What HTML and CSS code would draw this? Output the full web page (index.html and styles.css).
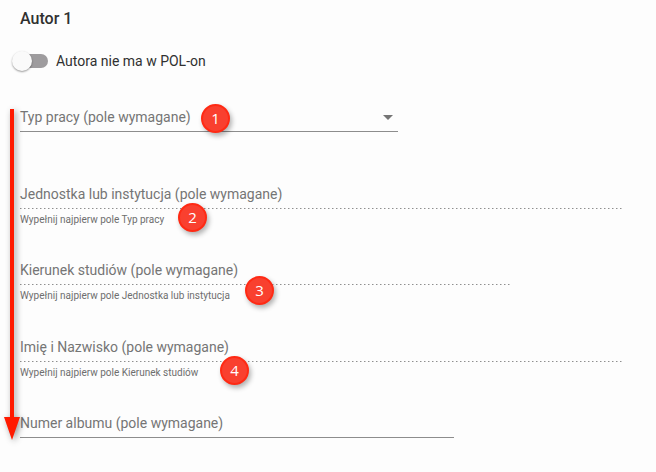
FILE: index.html
```html
<!DOCTYPE html>
<html lang="pl">
<head>
<meta charset="utf-8">
<meta name="viewport" content="width=device-width, initial-scale=1">
<title>Autor 1</title>
<link rel="stylesheet" href="styles.css">
</head>
<body>
<main class="page">
  <form class="author">
    <h2 class="title">Autor 1</h2>
    <label class="toggle">
      <input class="switch" type="checkbox" role="switch">
      <span>Autora nie ma w POL-on</span>
    </label>

    <div class="field field-select">
      <div class="control">
        <select class="input" id="type"><option value=""></option></select>
        <label class="label" for="type">Typ pracy (pole wymagane)</label>
        <svg class="caret" viewBox="0 0 10 5" aria-hidden="true"><path d="M0 0h10L5 5z"/></svg>
      </div>
    </div>
    <div class="field">
      <div class="control disabled">
        <input class="input" id="unit" type="text" disabled aria-describedby="unit-hint">
        <label class="label" for="unit">Jednostka lub instytucja (pole wymagane)</label>
      </div>
      <p class="hint" id="unit-hint">Wypełnij najpierw pole Typ pracy</p>
    </div>
    <div class="field field-course">
      <div class="control disabled">
        <input class="input" id="course" type="text" disabled aria-describedby="course-hint">
        <label class="label" for="course">Kierunek studiów (pole wymagane)</label>
      </div>
      <p class="hint" id="course-hint">Wypełnij najpierw pole Jednostka lub instytucja</p>
    </div>
    <div class="field">
      <div class="control disabled">
        <input class="input" id="name" type="text" disabled aria-describedby="name-hint">
        <label class="label" for="name">Imię i Nazwisko (pole wymagane)</label>
      </div>
      <p class="hint" id="name-hint">Wypełnij najpierw pole Kierunek studiów</p>
    </div>
    <div class="field field-album">
      <div class="control">
        <input class="input" id="album" type="text">
        <label class="label" for="album">Numer albumu (pole wymagane)</label>
      </div>
    </div>
  </form>

  <svg class="arrow" viewBox="0 0 16 332" aria-hidden="true"><path d="M6 0h4v308h6L8 331 0 308h6z"/></svg>
  <span class="badge badge-1">1</span>
  <span class="badge badge-2">2</span>
  <span class="badge badge-3">3</span>
  <span class="badge badge-4">4</span>
</main>
</body>
</html>
```
FILE: styles.css
```css
* {
  box-sizing: border-box;
}

body {
  margin: 0;
  background: #fdfdfd;
  color: #303030;
  font: 14px/20px Roboto, "Liberation Sans", sans-serif;
}

.page {
  position: relative;
}

.author {
  display: flex;
  flex-direction: column;
  padding: 9px 34px 24px 20px;
}

.title {
  margin: 0 0 22px;
  font-size: 16px;
  font-weight: 500;
  line-height: 20px;
}

.toggle {
  display: flex;
  align-items: center;
  align-self: flex-start;
  gap: 8px;
  margin: 0 0 33px -8px;
}

.switch {
  appearance: none;
  display: flex;
  align-items: center;
  width: 36px;
  height: 14px;
  margin: 0;
  border-radius: 7px;
  background: linear-gradient(#9e9c9e, #9e9c9e) right / 30px 14px no-repeat;
}

.switch::before {
  content: "";
  width: 20px;
  height: 20px;
  flex: none;
  border-radius: 50%;
  background: #fafafa;
  box-shadow: 0 1px 2px rgba(0, 0, 0, 0.4);
}

.switch:checked::before {
  margin-left: 16px;
}

.field {
  height: 76px;
}

.field-select {
  width: 100%;
  max-width: 378px;
  height: 77px;
}

.field-course {
  width: 100%;
  max-width: 491px;
  height: 77px;
}

.field-album {
  width: 100%;
  max-width: 434px;
  height: auto;
}

.control {
  display: grid;
  align-items: center;
  height: 28px;
  padding-bottom: 3px;
  background: linear-gradient(#8d8d8d, #8d8d8d) bottom / 100% 1px no-repeat;
}

.disabled {
  background: repeating-linear-gradient(90deg, #8f8f8f 0 1px, #c8c8c8 1px 2px, transparent 2px 4px) bottom / 100% 1px no-repeat;
}

.input,
.label,
.caret {
  grid-area: 1 / 1;
}

.input {
  appearance: none;
  width: 100%;
  height: 25px;
  padding: 0;
  border: 0;
  outline: 0;
  background: transparent;
  color: inherit;
  font: inherit;
}

.label {
  color: #757575;
  pointer-events: none;
}

.caret {
  justify-self: end;
  width: 10px;
  height: 5px;
  margin: 2px 5px 0 0;
  fill: #757575;
  pointer-events: none;
}

.hint {
  margin: 2px 0 0;
  color: #6e6e6e;
  font-size: 10px;
  line-height: 18px;
}

.arrow {
  position: absolute;
  top: 109px;
  left: 4px;
  width: 16px;
  height: 332px;
  overflow: visible;
  fill: #ff1a00;
  filter: drop-shadow(2px 2px 3px rgba(0, 0, 0, 0.4));
}

.badge {
  position: absolute;
  width: 29px;
  height: 29px;
  border: 2px solid #ff2a14;
  border-radius: 50%;
  background: #f9402f;
  box-shadow: 2px 3px 5px rgba(0, 0, 0, 0.3);
  color: #fff;
  font: 15px/24px "Open Sans", "Noto Sans", sans-serif;
  text-align: center;
}

.badge-1 {
  top: 104px;
  left: 201px;
}

.badge-2 {
  top: 203px;
  left: 178px;
}

.badge-3 {
  top: 276px;
  left: 245px;
}

.badge-4 {
  top: 356px;
  left: 220px;
}
```
